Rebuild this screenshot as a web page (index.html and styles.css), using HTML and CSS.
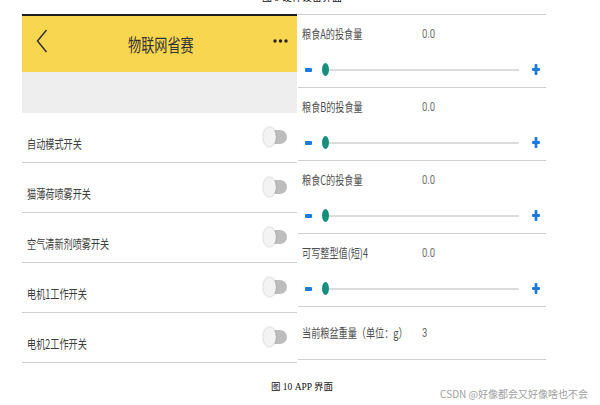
FILE: index.html
```html
<!DOCTYPE html>
<html lang="zh">
<head>
<meta charset="utf-8">
<link rel="stylesheet" href="styles.css">
</head>
<body>
<div class="page">
  <div class="topcap"><span>图 9 硬件设备界面</span></div>
  <div class="figure">
    <div class="left">
      <div class="header">
        <svg class="back" width="12" height="24" viewBox="0 0 12 24"><polyline points="10.5,1 1.5,12 10.5,23" fill="none" stroke="#333" stroke-width="1.5"/></svg>
        <div class="title"><span class="sx">物联网省赛</span></div>
        <svg class="more" width="15" height="4" viewBox="0 0 15 4"><circle cx="2" cy="2" r="1.7" fill="#222"/><circle cx="7.5" cy="2" r="1.7" fill="#222"/><circle cx="13" cy="2" r="1.7" fill="#222"/></svg>
      </div>
      <div class="graybar"></div>
      <div class="row"><span class="label sx">自动模式开关</span><span class="toggle"><span class="track"></span><span class="thumb"></span></span></div>
      <div class="row"><span class="label sx">猫薄荷喷雾开关</span><span class="toggle"><span class="track"></span><span class="thumb"></span></span></div>
      <div class="row"><span class="label sx">空气清新剂喷雾开关</span><span class="toggle"><span class="track"></span><span class="thumb"></span></span></div>
      <div class="row"><span class="label sx">电机1工作开关</span><span class="toggle"><span class="track"></span><span class="thumb"></span></span></div>
      <div class="row"><span class="label sx">电机2工作开关</span><span class="toggle"><span class="track"></span><span class="thumb"></span></span></div>
    </div>
    <div class="right">
      <div class="group">
        <div class="line"><span class="name"><span class="sx">粮食A的投食量</span></span><span class="val sx">0.0</span></div>
        <div class="slider"><span class="minus"></span><span class="knob"></span><span class="rail"></span><svg class="plus" width="8" height="11" viewBox="0 0 8 11"><rect x="2.6" y="0" width="2.8" height="11" rx="0.8" fill="#1f7ae0"/><rect x="0" y="4.1" width="8" height="2.8" rx="0.8" fill="#1f7ae0"/></svg></div>
      </div>
      <div class="group">
        <div class="line"><span class="name"><span class="sx">粮食B的投食量</span></span><span class="val sx">0.0</span></div>
        <div class="slider"><span class="minus"></span><span class="knob"></span><span class="rail"></span><svg class="plus" width="8" height="11" viewBox="0 0 8 11"><rect x="2.6" y="0" width="2.8" height="11" rx="0.8" fill="#1f7ae0"/><rect x="0" y="4.1" width="8" height="2.8" rx="0.8" fill="#1f7ae0"/></svg></div>
      </div>
      <div class="group">
        <div class="line"><span class="name"><span class="sx">粮食C的投食量</span></span><span class="val sx">0.0</span></div>
        <div class="slider"><span class="minus"></span><span class="knob"></span><span class="rail"></span><svg class="plus" width="8" height="11" viewBox="0 0 8 11"><rect x="2.6" y="0" width="2.8" height="11" rx="0.8" fill="#1f7ae0"/><rect x="0" y="4.1" width="8" height="2.8" rx="0.8" fill="#1f7ae0"/></svg></div>
      </div>
      <div class="group">
        <div class="line"><span class="name"><span class="sx">可写整型值(短)4</span></span><span class="val sx">0.0</span></div>
        <div class="slider"><span class="minus"></span><span class="knob"></span><span class="rail"></span><svg class="plus" width="8" height="11" viewBox="0 0 8 11"><rect x="2.6" y="0" width="2.8" height="11" rx="0.8" fill="#1f7ae0"/><rect x="0" y="4.1" width="8" height="2.8" rx="0.8" fill="#1f7ae0"/></svg></div>
      </div>
      <div class="group last">
        <div class="line tall"><span class="name"><span class="sx">当前粮盆重量（单位：g）</span></span><span class="val sx">3</span></div>
      </div>
    </div>
  </div>
  <div class="footer">
    <div class="caption">图 10 APP 界面</div>
    <div class="watermark">CSDN @好像都会又好像啥也不会</div>
  </div>
</div>
</body>
</html>
```

FILE: styles.css
```css
html, body {
  margin: 0;
  padding: 0;
  background: #fff;
}
body {
  width: 600px;
  height: 405px;
  overflow: hidden;
  font-family: "Noto Sans CJK SC", "Noto Sans", sans-serif;
}
.page {
  width: 600px;
  height: 405px;
  position: relative;
}
.topcap {
  height: 14px;
  overflow: hidden;
  text-align: center;
  padding-left: 4px;
}
.topcap span {
  display: block;
  margin-top: -8px;
  font-family: "Liberation Serif", "Noto Sans CJK SC", serif;
  font-size: 10px;
  line-height: 12px;
  color: #111;
}
.figure {
  display: flex;
  align-items: flex-start;
  margin-left: 22px;
}
.sx {
  display: inline-block;
  transform: scaleX(0.73);
  transform-origin: left center;
  white-space: nowrap;
}
/* left phone panel */
.left {
  width: 275px;
  border-top: 2px solid #1d1d1d;
}
.header {
  height: 56px;
  background: #f9d64f;
  display: grid;
  grid-template-columns: 1fr auto 1fr;
  align-items: center;
  padding: 0 9px 0 14px;
}
.back {
  display: block;
  margin-top: -6px;
}
.title {
  font-size: 18px;
  color: #333;
  width: 66px;
  height: 24px;
  line-height: 24px;
  margin-left: -3px;
}
.more {
  justify-self: end;
  display: block;
  margin-top: -6px;
}
.graybar {
  height: 41px;
  background: #eeeeee;
}
.row {
  height: 49px;
  border-bottom: 1px solid #cfcfcf;
  display: flex;
  align-items: center;
  justify-content: space-between;
  padding: 0 10px 0 5px;
}
.label {
  font-size: 12.5px;
  color: #3e3e3e;
  padding-top: 12px;
  line-height: 16px;
}
.toggle {
  position: relative;
  width: 24px;
  height: 20px;
  margin-bottom: 1px;
  display: flex;
  align-items: center;
  justify-content: flex-end;
}
.track {
  width: 18px;
  height: 14px;
  border-radius: 7px;
  background: #bdbdbd;
}
.thumb {
  position: absolute;
  left: 0;
  top: 0;
  width: 13px;
  height: 20px;
  border-radius: 50%;
  background: #f3f3f3;
  box-shadow: 0 0 1.5px rgba(0,0,0,0.35);
}
/* right panel */
.right {
  width: 248px;
  border-top: 1px solid #cfcfcf;
  margin-left: 1px;
}
.group {
  height: 72px;
  border-bottom: 1px solid #cfcfcf;
}
.group.last {
  height: 52px;
}
.line {
  height: 37px;
  display: grid;
  grid-template-columns: 120px 1fr;
  align-items: center;
  padding-left: 4px;
}
.line.tall {
  height: 52px;
}
.name {
  font-size: 12.5px;
  color: #4e4e4e;
  line-height: 16px;
}
.val {
  font-family: Roboto, "Noto Sans", sans-serif;
  font-size: 13px;
  color: #707070;
  line-height: 16px;
}
.slider {
  height: 35px;
  display: flex;
  align-items: center;
  padding: 0 6px 0 7px;
}
.minus {
  width: 7px;
  height: 4px;
  border-radius: 1px;
  background: #1f7ae0;
}
.knob {
  width: 7px;
  height: 13px;
  border-radius: 50%;
  background: #16907c;
  margin-left: 10px;
  flex: none;
}
.rail {
  flex: 1;
  height: 2px;
  background: #dcdcdc;
}
.plus {
  display: block;
  margin-left: 13px;
}
/* footer */
.footer {
  position: relative;
  margin-top: 18px;
}
.caption {
  text-align: center;
  font-family: "Liberation Serif", "Noto Sans CJK SC", serif;
  font-size: 9.5px;
  line-height: 12px;
  color: #111;
  padding-left: 4px;
}
.watermark {
  position: absolute;
  right: 12px;
  top: 6px;
  font-family: "Noto Sans CJK SC", sans-serif;
  font-size: 10px;
  line-height: 14px;
  color: #a0a0a0;
  white-space: nowrap;
}
```
